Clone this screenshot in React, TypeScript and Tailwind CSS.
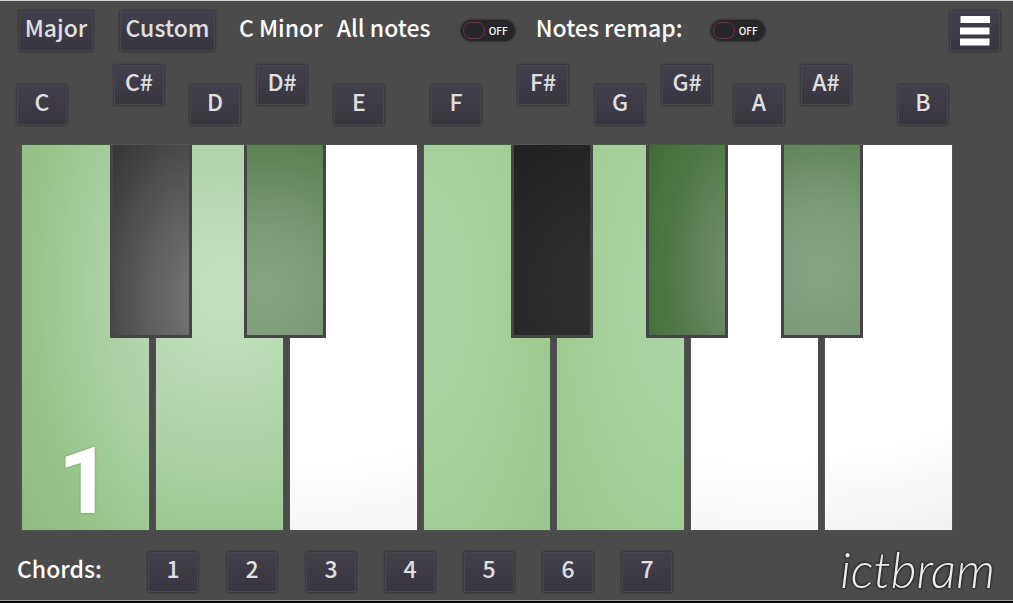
import { useState } from "react";
import type { ReactNode } from "react";

const notes = [
  { name: "C", place: "mt-5" },
  { name: "C#", place: "ml-[47px]" },
  { name: "D", place: "mt-5 ml-[26px]" },
  { name: "D#", place: "ml-[17px]" },
  { name: "E", place: "mt-5 ml-[27px]" },
  { name: "F", place: "mt-5 ml-[47px]" },
  { name: "F#", place: "ml-[37px]" },
  { name: "G", place: "mt-5 ml-[27px]" },
  { name: "G#", place: "ml-[17px]" },
  { name: "A", place: "mt-5 ml-[22px]" },
  { name: "A#", place: "ml-[17px]" },
  { name: "B", place: "mt-5 ml-[47px]" },
];

const whiteKeys = [
  { name: "C", fill: "bg-[radial-gradient(ellipse_205px_330px_at_205px_145px,#c5e1c1_0%,#afd3a9_50%,#98c58c_95%,#8fba82_125%)]" },
  { name: "D", fill: "bg-[radial-gradient(circle_at_72px_145px,#c5e1c1_0px,#afd3a9_150px,#9ac68e_260px)]" },
  { name: "E", fill: "bg-[radial-gradient(circle_at_20%_0%,#ffffff_320px,#f3f3f3_410px)]" },
  { name: "F", fill: "bg-[radial-gradient(ellipse_100px_240px_at_0px_150px,#add4a6_0%,#a2cf97_90%,#9ac78e_160%)]" },
  { name: "G", fill: "bg-[radial-gradient(ellipse_110px_240px_at_100%_150px,#aed4a8_0%,#a2cf97_90%,#9ac78e_160%)]" },
  { name: "A", fill: "bg-[radial-gradient(circle_at_60%_0%,#ffffff_320px,#f5f5f5_410px)]" },
  { name: "B", fill: "bg-[radial-gradient(circle_at_0%_0%,#ffffff_310px,#efefef_410px)]" },
];

const blackKeys = [
  { name: "C#", place: "left-[9.5%]", fill: "bg-[radial-gradient(ellipse_110px_190px_at_115%_80%,#7a7a7a_0%,#5c5c5c_55%,#383838_110%)]" },
  { name: "D#", place: "left-[23.9%]", fill: "bg-[radial-gradient(circle_at_25%_75%,#87a383_0px,#7d9b79_60px,#567d4c_160px)]" },
  { name: "F#", place: "left-[52.6%]", fill: "bg-[radial-gradient(circle_at_130%_75%,#323232_0px,#292929_90px,#202020_180px)]" },
  { name: "G#", place: "left-[67.1%]", fill: "bg-[radial-gradient(ellipse_100px_200px_at_115%_65%,#76956f_0%,#6a8a64_25%,#4d7644_75%,#3f6b34_115%)]" },
  { name: "A#", place: "left-[81.6%]", fill: "bg-[radial-gradient(circle_at_48%_65%,#87a384_0px,#7d9b79_65px,#5f8357_135px)]" },
];

function PadButton({ children, className = "", label }: { children: ReactNode; className?: string; label?: string }) {
  return (
    <button
      type="button"
      aria-label={label}
      className={`flex h-10 shrink-0 items-center justify-center rounded-[2px] border border-[#4a4755] bg-linear-to-b from-[#43404d] to-[#383540] text-[#e0e0e0] shadow-[0_0_2px_1px_rgba(0,0,0,0.3)] ${className}`}
    >
      {children}
    </button>
  );
}

function Toggle({ id }: { id: string }) {
  const [on, setOn] = useState(false);
  return (
    <span className="relative mt-[9px] block h-[21px] w-[54px]">
      <input
        id={id}
        type="checkbox"
        role="switch"
        checked={on}
        onChange={() => setOn(!on)}
        className="block h-full w-full appearance-none rounded-full bg-[#26252a] shadow-[0_0_2px_1px_rgba(0,0,0,0.3)]"
      />
      <span className="pointer-events-none absolute inset-0 flex items-center justify-between pr-[7px] pl-[2px]">
        <span className="h-[17px] w-[22px] rounded-[8px] border border-[#7c2b47]" />
        <span className="text-[10px] leading-none text-white">{on ? "ON" : "OFF"}</span>
      </span>
    </span>
  );
}

export default function App() {
  return (
    <div className="flex min-h-screen flex-col border-t border-[#d0d4d0] bg-[#4b4b4b] font-['Noto_Sans_CJK_SC','Noto_Sans',sans-serif] text-[23px] leading-8 font-medium text-white">
      <header className="flex items-start pt-[10px] pr-[13px] pl-[19px]">
        <PadButton className="w-[74px] pb-2">Major</PadButton>
        <PadButton className="ml-[27px] w-[95px] pb-2">Custom</PadButton>
        <h1 className="ml-6 whitespace-nowrap">C Minor</h1>
        <label htmlFor="all-notes" className="ml-[14px] w-[124px] whitespace-nowrap">All notes</label>
        <Toggle id="all-notes" />
        <label htmlFor="notes-remap" className="ml-[21px] w-[175px] whitespace-nowrap">Notes remap:</label>
        <Toggle id="notes-remap" />
        <PadButton className="ml-auto w-[50px]" label="Menu">
          <svg viewBox="0 0 30 30" className="h-[30px] w-[30px]" fill="#ffffff" aria-hidden="true">
            <path d="M.5 0H30v7H.5zM0 11.5h29.5v7H0zM0 22.5h29.5v7H0z" />
          </svg>
        </PadButton>
      </header>

      <nav aria-label="Root note" className="mt-[14px] flex items-start pl-[17px]">
        {notes.map((n) => (
          <PadButton key={n.name} className={`w-[50px] pb-2 ${n.place}`}>{n.name}</PadButton>
        ))}
      </nav>

      <main className="relative mt-5 mr-[61px] ml-[22px] flex min-h-[385px] flex-1 gap-[7px]">
        {whiteKeys.map((k) => (
          <button
            key={k.name}
            type="button"
            aria-label={k.name}
            className={`flex flex-1 items-end pb-[6px] pl-9 shadow-[0_0_1px_1px_rgba(90,90,90,0.5)] ${k.fill}`}
          >
            {k.name === "C" && (
              <span className="font-['Roboto',sans-serif] text-[92px] leading-[84px] font-extrabold text-white [text-shadow:0_0_2px_rgba(60,90,50,0.7)]">
                1
              </span>
            )}
          </button>
        ))}
        {blackKeys.map((k) => (
          <button
            key={k.name}
            type="button"
            aria-label={k.name}
            className={`absolute top-0 h-1/2 w-[8.8%] border-x-[3px] border-b-[3px] border-[#454545] bg-origin-border ${k.place} ${k.fill}`}
          />
        ))}
      </main>

      <footer className="mt-[22px] flex h-[48px] items-start pr-[18px] pl-[17px]">
        <span className="w-[131px]">Chords:</span>
        <div className="flex gap-[29px]">
          {[1, 2, 3, 4, 5, 6, 7].map((c) => (
            <PadButton key={c} className="w-[50px] pb-2">{c}</PadButton>
          ))}
        </div>
        <a
          href="#ictbram"
          className="ml-auto font-['Lato',sans-serif] text-[50px] leading-[34px] font-light text-[#ececec] italic [text-shadow:0_0_2px_#111,0_0_3px_#111]"
        >
          ictbram
        </a>
      </footer>
      <div className="h-[3px] border-t border-[#999999] bg-black" />
    </div>
  );
}
